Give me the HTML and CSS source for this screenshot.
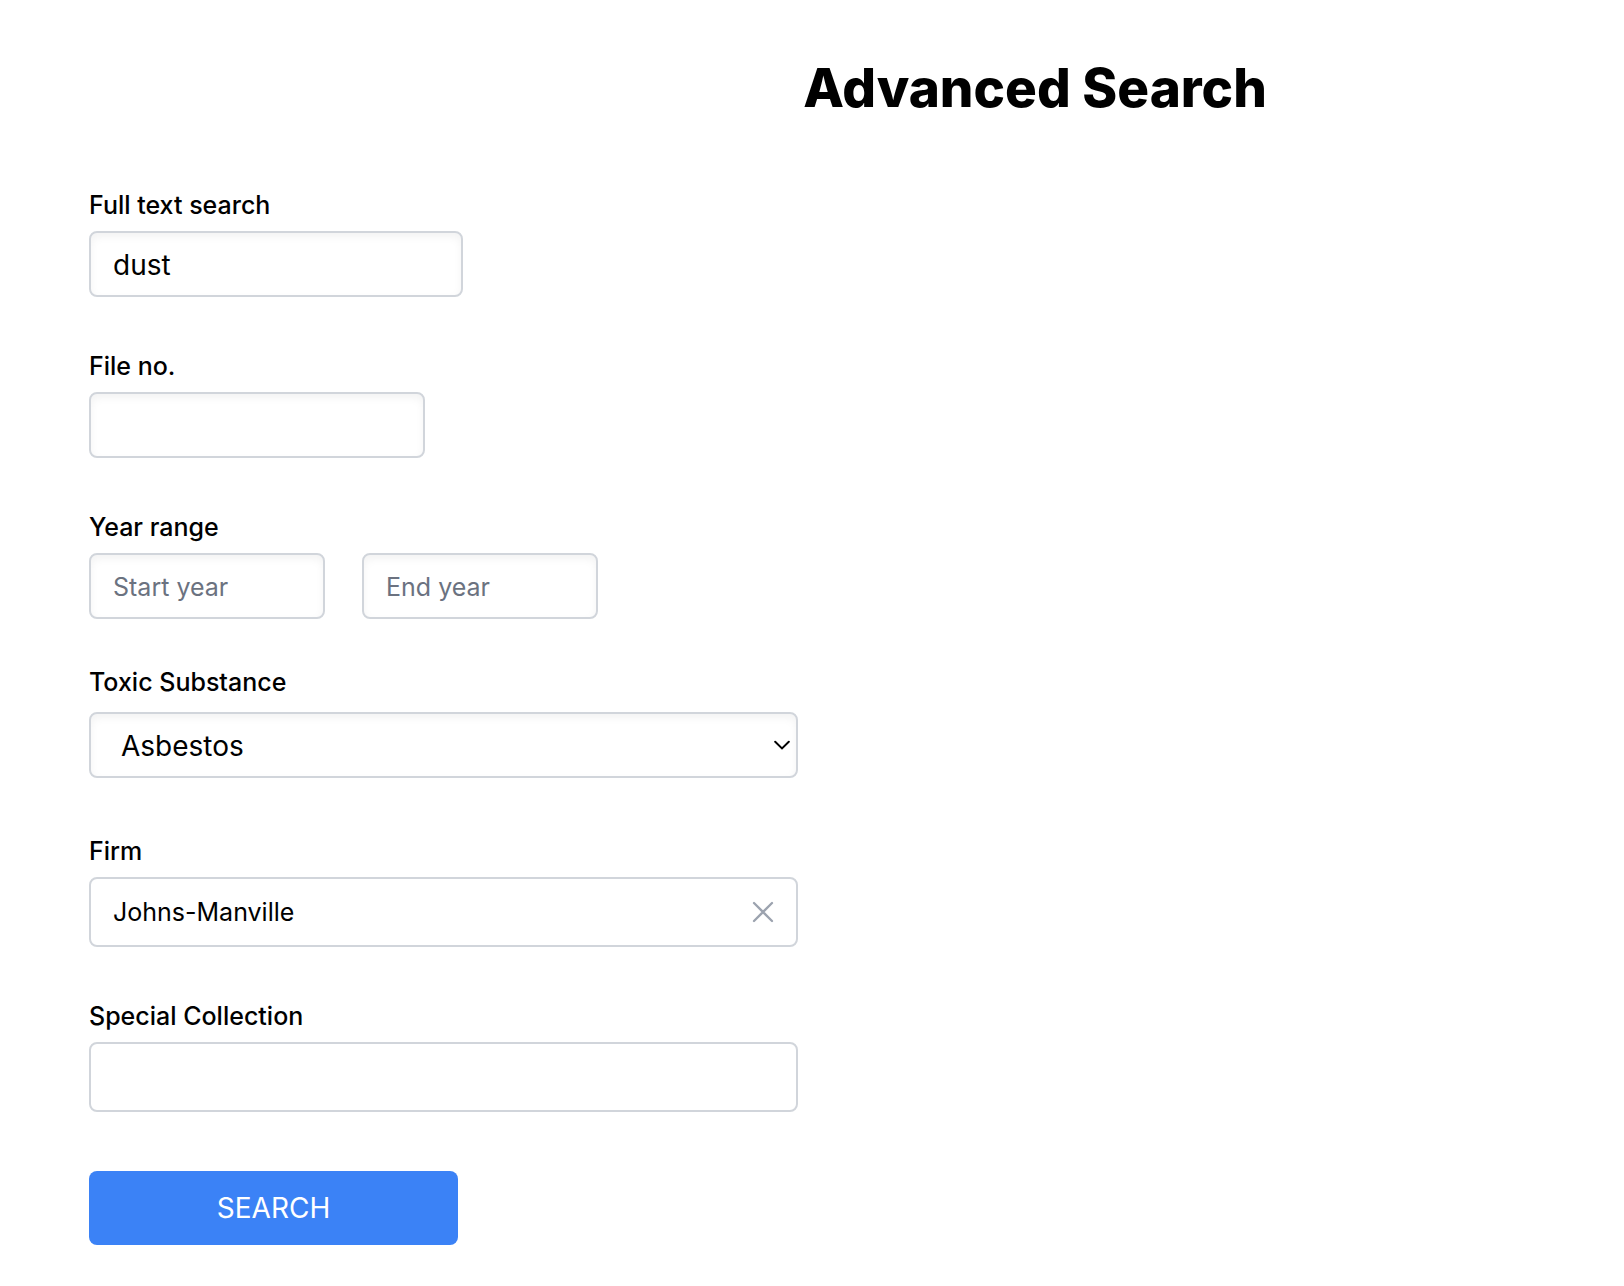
FILE: index.html
```html
<!DOCTYPE html>
<html lang="en">
<head>
<meta charset="utf-8">
<meta name="viewport" content="width=device-width, initial-scale=1">
<title>Advanced Search</title>
<link rel="stylesheet" href="styles.css">
</head>
<body>
<main class="page">
  <h1 class="title">Advanced Search</h1>
  <form class="form">
    <div class="field">
      <label class="label" for="fulltext">Full text search</label>
      <input class="control control-text" id="fulltext" type="text" value="dust">
    </div>
    <div class="field">
      <label class="label" for="fileno">File no.</label>
      <input class="control control-file" id="fileno" type="text">
    </div>
    <div class="field field-years">
      <label class="label" for="startyear">Year range</label>
      <div class="years">
        <input class="control control-year" id="startyear" type="text" placeholder="Start year">
        <input class="control control-year" type="text" placeholder="End year" aria-label="End year">
      </div>
    </div>
    <div class="field field-select">
      <label class="label" for="substance">Toxic Substance</label>
      <div class="stack">
        <select class="control control-select" id="substance">
          <option>Asbestos</option>
        </select>
        <svg class="chevron" viewBox="0 0 16 10" fill="none" stroke="currentColor" stroke-width="2" stroke-linecap="round" stroke-linejoin="miter" aria-hidden="true"><path d="M1.2 1.8L8 8.4l6.8-6.6"/></svg>
      </div>
    </div>
    <div class="field">
      <label class="label" for="firm">Firm</label>
      <div class="stack">
        <input class="control control-combo" id="firm" type="text" value="Johns-Manville">
        <button class="clear" type="button" aria-label="Clear firm">
          <svg class="cross" viewBox="0 0 22 22" fill="none" stroke="currentColor" stroke-width="2.3" stroke-linecap="round" aria-hidden="true"><path d="M2 2l18 18M20 2L2 20"/></svg>
        </button>
      </div>
    </div>
    <div class="field field-last">
      <label class="label" for="collection">Special Collection</label>
      <input class="control control-combo" id="collection" type="text">
    </div>
    <button class="submit" type="submit">SEARCH</button>
  </form>
</main>
</body>
</html>
```
FILE: styles.css
```css
*,
*::before,
*::after {
  box-sizing: border-box;
}

body {
  margin: 0;
  background: #fff;
  color: #000;
  font-family: Inter, "Liberation Sans", sans-serif;
}

.page {
  padding: 56px 0 40px 89px;
}

.title {
  margin: 0 0 67px;
  padding-left: 357px;
  font-size: 53px;
  line-height: 64px;
  font-weight: 800;
  text-align: center;
}

.form {
  display: flex;
  flex-direction: column;
  align-items: flex-start;
  width: 100%;
  max-width: 709px;
}

.field {
  display: flex;
  flex-direction: column;
  gap: 8px;
  width: 100%;
  margin-bottom: 51px;
}

.field-years {
  margin-bottom: 45px;
}

.field-select {
  gap: 12px;
  margin-bottom: 55px;
}

.field-last {
  margin-bottom: 59px;
}

.label {
  font-size: 25px;
  line-height: 36px;
  font-weight: 500;
}

.control {
  width: 100%;
  height: 66px;
  margin: 0;
  padding: 2px 22px 0;
  border: 2px solid #d1d5db;
  border-radius: 8px;
  background: #fff;
  box-shadow: inset 0 4px 8px rgba(0, 0, 0, 0.05);
  color: #000;
  font-family: inherit;
  font-size: 28px;
  line-height: 36px;
}

.control::placeholder {
  color: #6b7280;
  opacity: 1;
}

.control-text {
  max-width: 374px;
}

.control-file {
  max-width: 336px;
}

.control-year {
  max-width: 236px;
  font-size: 25px;
}

.years {
  display: flex;
  gap: 37px;
}

.stack {
  display: grid;
  align-items: center;
}

.stack > * {
  grid-area: 1 / 1;
}

.control-select {
  appearance: none;
  padding: 2px 30px 0;
}

.chevron {
  justify-self: end;
  width: 16px;
  height: 10px;
  margin-right: 8px;
  pointer-events: none;
}

.control-combo {
  height: 70px;
  padding-top: 0;
  box-shadow: none;
  font-size: 25px;
}

.clear {
  display: flex;
  justify-self: end;
  margin: 0 24px 0 0;
  padding: 0;
  border: 0;
  background: none;
  color: #9ca3af;
}

.cross {
  width: 22px;
  height: 22px;
}

.submit {
  width: 100%;
  max-width: 369px;
  height: 74px;
  padding: 0;
  border: 0;
  border-radius: 8px;
  background: #3b82f6;
  color: #fff;
  font-family: inherit;
  font-size: 28px;
  line-height: 36px;
}
```
